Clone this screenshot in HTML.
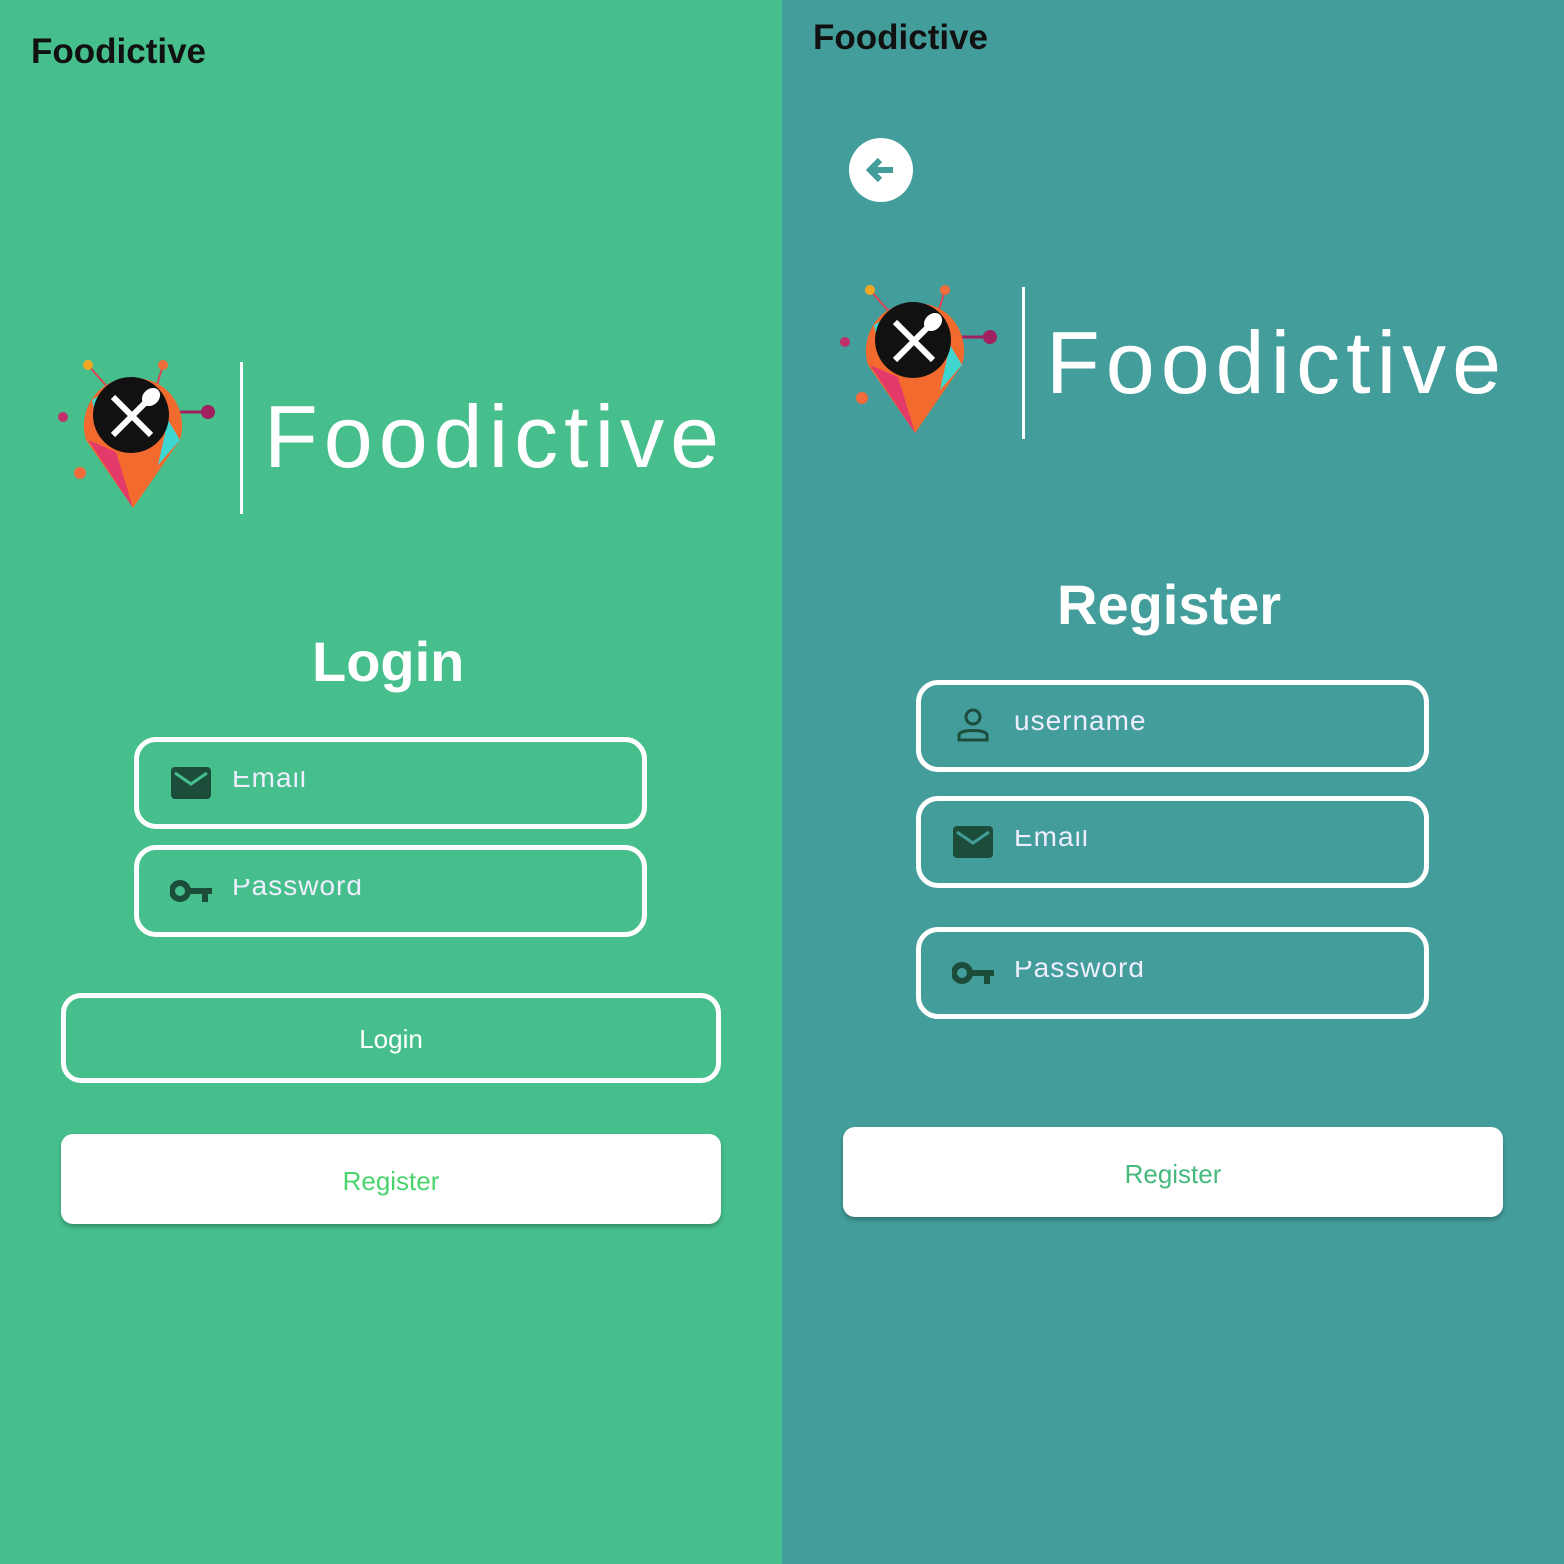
<!DOCTYPE html>
<html><head><style>
body{margin:0;width:1564px;height:1564px;position:relative;overflow:hidden;font-family:"Liberation Sans",sans-serif}
.l{position:absolute;left:0;top:0;width:782px;height:1564px;background:#46bf8c}
.r{position:absolute;left:782px;top:0;width:782px;height:1564px;background:#439d9b}
.a{position:absolute}
.title{font-size:35px;color:#111;font-weight:bold}
.box{position:absolute;border:5px solid #fff;border-radius:22px;box-sizing:border-box}
.ph{position:absolute;color:#eef;font-size:28px;letter-spacing:1px;overflow:hidden;height:22px}
.ph span{display:block;margin-top:-11px;line-height:36px;white-space:nowrap}
.btn{position:absolute;background:#fff;border-radius:12px;box-shadow:0 3px 4px rgba(0,0,0,.25);color:#4bd46e;font-size:26px;text-align:center}
.big{position:absolute;color:#fff;font-size:88px;letter-spacing:6px}
.h{position:absolute;color:#fff;font-size:56px;font-weight:bold}
</style></head><body>
<div class="l"></div><div class="r"></div>

<svg width="0" height="0" style="position:absolute"><defs>
<g id="logo">
<line x1="30" y1="5" x2="52" y2="30" stroke="#d45" stroke-width="2"/><circle cx="30" cy="5" r="5" fill="#f5a623"/>
<line x1="105" y1="5" x2="98" y2="28" stroke="#d45" stroke-width="2"/><circle cx="105" cy="5" r="5" fill="#f26b3a"/>
<line x1="120" y1="52" x2="150" y2="52" stroke="#a02060" stroke-width="3"/><circle cx="150" cy="52" r="7" fill="#a02060"/>
<circle cx="5" cy="57" r="5" fill="#c0306a"/>
<circle cx="22" cy="113" r="6" fill="#f26b3a"/>
<path d="M75 18 C115 18 130 55 122 80 L75 148 L28 80 C20 55 35 18 75 18Z" fill="#f36a2e"/>
<path d="M30 80 L75 148 L58 92Z" fill="#e33a6a"/>
<path d="M122 80 L100 105 L110 60Z" fill="#3fd6d0"/>
<path d="M34 40 L50 30 L40 70Z" fill="#3fd6d0"/>
<circle cx="73" cy="55" r="38" fill="#111"/>
<path d="M55 37 L93 75 M93 37 L55 75" stroke="#fff" stroke-width="6"/>
<ellipse cx="93" cy="37" rx="8" ry="10" fill="#fff" transform="rotate(45 93 37)"/>
</g></defs></svg>

<div class="a title" style="left:31px;top:32px">Foodictive</div>
<svg class="a" style="left:58px;top:360px" width="160" height="150"><use href="#logo"/></svg>
<div class="a" style="left:240px;top:362px;width:3px;height:152px;background:#fff"></div>
<div class="big" style="left:264px;top:386px">Foodictive</div>
<div class="h" style="left:312px;top:629px">Login</div>

<div class="box" style="left:134px;top:737px;width:513px;height:92px"></div>
<svg class="a" style="left:170px;top:766px" width="42" height="34"><rect x="1" y="1" width="40" height="32" rx="4" fill="#1b4d3a"/><path d="M5 7 L21 18 L37 7" stroke="#46bf8c" stroke-width="3" fill="none"/></svg>
<div class="ph" style="left:232px;top:771px"><span>Email</span></div>
<div class="box" style="left:134px;top:845px;width:513px;height:92px"></div>
<svg class="a" style="left:170px;top:878px" width="44" height="28"><circle cx="10" cy="13" r="8" stroke="#1b4d3a" stroke-width="6" fill="none"/><path d="M18 10 H42 V16 H38 V24 H32 V16 H18Z" fill="#1b4d3a"/></svg>
<div class="ph" style="left:232px;top:879px"><span>Password</span></div>

<div class="box" style="left:61px;top:993px;width:660px;height:90px;border-radius:20px"></div>
<div class="a" style="left:61px;top:1024px;width:660px;text-align:center;color:#fff;font-size:26px">Login</div>
<div class="btn" style="left:61px;top:1134px;width:660px;height:90px;line-height:94px">Register</div>

<div class="a title" style="left:813px;top:18px">Foodictive</div>
<div class="a" style="left:849px;top:138px;width:64px;height:64px;border-radius:50%;background:#fff"></div>
<svg class="a" style="left:865px;top:156px" width="32" height="28"><path d="M4 14 H28 M15 4 L5 14 L15 24" stroke="#439d9b" stroke-width="6" fill="none"/></svg>
<svg class="a" style="left:840px;top:285px" width="160" height="150"><use href="#logo"/></svg>
<div class="a" style="left:1022px;top:287px;width:3px;height:152px;background:#fff"></div>
<div class="big" style="left:1046px;top:312px">Foodictive</div>
<div class="h" style="left:1057px;top:572px">Register</div>

<div class="box" style="left:916px;top:680px;width:513px;height:92px"></div>
<svg class="a" style="left:956px;top:707px" width="34" height="36"><circle cx="17" cy="10" r="7" stroke="#1b4d3a" stroke-width="3" fill="none"/><path d="M3 33 V28 C3 22 31 22 31 28 V33Z" stroke="#1b4d3a" stroke-width="3" fill="none"/></svg>
<div class="ph" style="left:1014px;top:714px"><span>username</span></div>
<div class="box" style="left:916px;top:796px;width:513px;height:92px"></div>
<svg class="a" style="left:952px;top:825px" width="42" height="34"><rect x="1" y="1" width="40" height="32" rx="4" fill="#1b4d3a"/><path d="M5 7 L21 18 L37 7" stroke="#439d9b" stroke-width="3" fill="none"/></svg>
<div class="ph" style="left:1014px;top:830px"><span>Email</span></div>
<div class="box" style="left:916px;top:927px;width:513px;height:92px"></div>
<svg class="a" style="left:952px;top:960px" width="44" height="28"><circle cx="10" cy="13" r="8" stroke="#1b4d3a" stroke-width="6" fill="none"/><path d="M18 10 H42 V16 H38 V24 H32 V16 H18Z" fill="#1b4d3a"/></svg>
<div class="ph" style="left:1014px;top:961px"><span>Password</span></div>

<div class="btn" style="left:843px;top:1127px;width:660px;height:90px;line-height:94px;color:#46b97e">Register</div>
</body></html>
